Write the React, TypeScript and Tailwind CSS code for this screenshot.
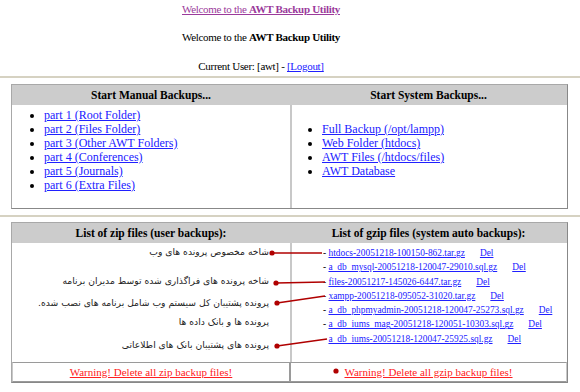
const manual = [
  "part 1 (Root Folder)",
  "part 2 (Files Folder)",
  "part 3 (Other AWT Folders)",
  "part 4 (Conferences)",
  "part 5 (Journals)",
  "part 6 (Extra Files)",
];

const system = [
  "Full Backup (/opt/lampp)",
  "Web Folder (htdocs)",
  "AWT Files (/htdocs/files)",
  "AWT Database",
];

const gzips = [
  "htdocs-20051218-100150-862.tar.gz",
  "a_db_mysql-20051218-120047-29010.sql.gz",
  "files-20051217-145026-6447.tar.gz",
  "xampp-20051218-095052-31020.tar.gz",
  "a_db_phpmyadmin-20051218-120047-25273.sql.gz",
  "a_db_iums_mag-20051218-120051-10303.sql.gz",
  "a_db_iums-20051218-120047-25925.sql.gz",
];

export default function App() {
  return (
    <div className="relative w-[580px] h-[392px] overflow-hidden bg-white text-black [font-family:Liberation_Serif,Times_New_Roman,serif]">
      {/* header lines */}
      <div className="w-[522px] pt-[2px] text-center text-[11px] tracking-[-0.3px] leading-[15px]">
        <div>
          <a href="#" className="text-[#9b3a9b] underline">
            Welcome to the <b>AWT Backup Utility</b>
          </a>
        </div>
        <div className="mt-[13px]">
          Welcome to the <b>AWT Backup Utility</b>
        </div>
        <div className="mt-[14px]">
          Current User: [awt] -{" "}
          <a href="#" className="text-[#2020ff] underline">
            [Logout]
          </a>
        </div>
      </div>

      <div className="mt-[2px] h-[2px] bg-[#d6d2c2]" />

      {/* backups table */}
      <div className="mt-[6px] ml-[11px] w-[557px] border border-[#a8a8a8] border-r-[#888888] border-b-[#888888]">
        <div className="grid grid-cols-[278px_1fr] h-[20px] bg-[#cccccc] text-[11.5px] font-bold leading-[20px] text-center">
          <div>Start Manual Backups...</div>
          <div>Start System Backups...</div>
        </div>
        <div className="grid grid-cols-[278px_1fr] h-[103px] text-[12px] leading-[14px]">
          <ul className="list-disc pl-[32px] pt-[3px]">
            {manual.map((m) => (
              <li key={m}>
                <a href="#" className="text-[#2020ff] underline">
                  {m}
                </a>
              </li>
            ))}
          </ul>
          <div className="border-l-2 border-[#c8c8c8]">
            <ul className="list-disc pl-[30px] pt-[17px]">
              {system.map((m) => (
                <li key={m}>
                  <a href="#" className="text-[#2020ff] underline">
                    {m}
                  </a>
                </li>
              ))}
            </ul>
          </div>
        </div>
      </div>

      <div className="mt-[6px] h-[2px] bg-[#d6d2c2]" />

      {/* files table */}
      <div className="mt-[5px] ml-[11px] w-[557px] border border-[#a8a8a8] border-r-[#888888] border-b-[#888888]">
        <div className="grid grid-cols-[278px_1fr] h-[20px] bg-[#cccccc] text-[11.5px] font-bold leading-[20px] text-center">
          <div>List of zip files (user backups):</div>
          <div>List of gzip files (system auto backups):</div>
        </div>
        <div className="grid grid-cols-[278px_1fr] h-[119px]">
          <div
            dir="rtl"
            className="pr-[21px] pt-[2px] text-right text-[9.2px] leading-[14px] whitespace-nowrap text-[#222222] [font-family:DejaVu_Sans,sans-serif]"
          >
            <div>شاخه مخصوص پرونده های وب</div>
            <div className="mt-[15px]">شاخه پرونده های فراگذاری شده توسط مدیران برنامه</div>
            <div className="mt-[8px]">پرونده پشتیبان کل سیستم وب شامل برنامه های نصب شده.</div>
            <div className="mt-[5px]">پرونده ها و بانک داده ها</div>
            <div className="mt-[9px]">پرونده های پشتیبان بانک های اطلاعاتی</div>
          </div>
          <div className="border-l-2 border-[#c8c8c8] pl-[31px] pt-[3px] text-[9.4px] leading-[14.3px]">
            {gzips.map((g) => (
              <div key={g} className="whitespace-nowrap">
                -{" "}
                <a href="#" className="text-[#2020ff] underline">
                  {g}
                </a>
                <a href="#" className="ml-[15px] text-[#2020ff] underline">
                  Del
                </a>
              </div>
            ))}
          </div>
        </div>
        <div className="grid grid-cols-[278px_1fr] h-[20px] text-[11px] leading-[18px] text-center">
          <div className="border border-[#9a9a9a] border-l-[#c8c8c8]">
            <a href="#" className="text-[#ff2020] underline">
              Warning! Delete all zip backup files!
            </a>
          </div>
          <div className="border border-[#9a9a9a] border-r-[#c8c8c8]">
            <a href="#" className="text-[#ff2020] underline">
              Warning! Delete all gzip backup files!
            </a>
          </div>
        </div>
      </div>

      {/* annotation overlay */}
      <svg className="pointer-events-none absolute inset-0" width="580" height="392">
        <g stroke="#b00000" strokeWidth="1.6" fill="none">
          <line x1="272" y1="253" x2="322" y2="253" />
          <line x1="276" y1="283" x2="325" y2="282" />
          <line x1="277" y1="303" x2="325" y2="296" />
          <line x1="277" y1="346" x2="327" y2="339" />
        </g>
        <g fill="#b00000">
          <circle cx="272" cy="253" r="2.6" />
          <circle cx="276" cy="283" r="2.6" />
          <circle cx="277" cy="303" r="2.6" />
          <circle cx="277" cy="346" r="2.6" />
          <circle cx="336" cy="371" r="2.6" />
        </g>
      </svg>
    </div>
  );
}
